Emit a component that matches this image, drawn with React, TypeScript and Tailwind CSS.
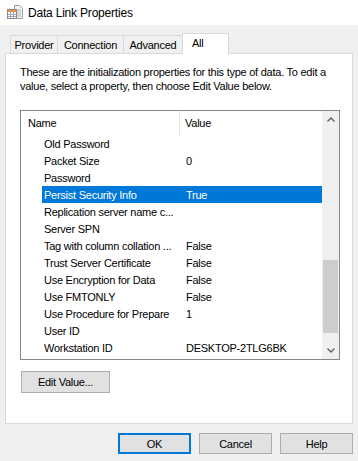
const rows: [string, string][] = [
  ['Old Password', ''],
  ['Packet Size', '0'],
  ['Password', ''],
  ['Persist Security Info', 'True'],
  ['Replication server name c...', ''],
  ['Server SPN', ''],
  ['Tag with column collation ...', 'False'],
  ['Trust Server Certificate', 'False'],
  ['Use Encryption for Data', 'False'],
  ['Use FMTONLY', 'False'],
  ['Use Procedure for Prepare', '1'],
  ['User ID', ''],
  ['Workstation ID', 'DESKTOP-2TLG6BK'],
]

const DataLinkIcon = () => (
  <svg width="16" height="16" viewBox="0 0 16 16">
    <path d="M7.5 0.5h5l3 3v10h-8z" fill="#f4f4f4" stroke="#9a9a9a" />
    <path d="M9 5h5M9 7h5M9 9h5M9 11h5" stroke="#b5b5b5" />
    <rect x="0.5" y="4.5" width="9" height="9" fill="#fff" stroke="#8a8a8a" />
    <rect x="1" y="5" width="8" height="2" fill="#e8913a" />
    <path d="M1 9.5h8M1 11.5h8M3.5 7v6M6.5 7v6" stroke="#9aa7b8" />
  </svg>
)

const Chevron = ({ up }: { up?: boolean }) => (
  <svg width="8" height="5" viewBox="0 0 8 5">
    <polyline
      points={up ? '0.5,4.5 4,1 7.5,4.5' : '0.5,0.5 4,4 7.5,0.5'}
      fill="none"
      stroke="#606060"
      strokeWidth="1.4"
    />
  </svg>
)

const Button = ({ label, primary, className = '' }: { label: string; primary?: boolean; className?: string }) => (
  <div
    className={`flex items-center justify-center bg-[#e1e1e1] text-black ${
      primary ? 'border-2 border-[#0078d7]' : 'border border-[#adadad]'
    } ${className}`}
  >
    {label}
  </div>
)

export default function App() {
  return (
    <div className="w-[358px] h-[461px] bg-[#f0f0f0] text-black text-[11px] tracking-[-0.25px] leading-[14px] font-['Liberation_Sans',Arial,sans-serif] overflow-hidden">
      <div className="h-[25px] bg-white flex items-center pl-[7px]">
        <DataLinkIcon />
        <span className="ml-[5px] text-[12px] tracking-[-0.2px]">Data Link Properties</span>
      </div>

      <div className="px-[5px] pt-[8px]">
        <div className="flex items-end pl-[5px] h-[20px]">
          <div className="w-[48px] h-[18px] flex items-center justify-center border border-b-0 border-[#d9d9d9]">Provider</div>
          <div className="w-[66px] h-[18px] flex items-center justify-center border-t border-r border-[#d9d9d9]">Connection</div>
          <div className="w-[58px] h-[18px] flex items-center justify-center border-t border-[#d9d9d9]">Advanced</div>
          <div className="relative z-10 -mb-px w-[47px] h-[21px] flex items-start pt-[2px] pl-[9px] bg-white border border-b-0 border-[#d9d9d9]">All</div>
        </div>

        <div className="w-[348px] h-[371px] bg-white border border-[#d9d9d9] pt-[11px] pl-[14px]">
          <p>
            These are the initialization properties for this type of data. To edit a
            <br />
            value, select a property, then choose Edit Value below.
          </p>

          <div className="mt-[17px] w-[320px] h-[250px] border border-[#828790] flex">
            <div className="w-[301px] flex flex-col">
              <div className="h-[24px] flex items-center shrink-0">
                <div className="w-[159px] pl-[7px] h-full flex items-center border-r border-[#e5e5e5] my-[2px]">Name</div>
                <div className="pl-[5px]">Value</div>
              </div>
              {rows.map(([name, value], i) => {
                const selected = i === 3
                return (
                  <div key={name} className="h-[17px] flex items-center shrink-0 pl-[21px]">
                    <div className={`flex-1 h-full flex items-center ${selected ? 'bg-[#0078d7] text-white' : ''}`}>
                      <div className="w-[142px] pl-[2px] whitespace-nowrap">{name}</div>
                      <div className="pl-[2px] whitespace-nowrap">{value}</div>
                    </div>
                  </div>
                )
              })}
            </div>
            <div className="w-[17px] bg-[#f0f0f0] flex flex-col">
              <div className="h-[17px] flex items-center justify-center">
                <Chevron up />
              </div>
              <div className="flex-1">
                <div className="mt-[132px] mx-[1px] h-[73px] bg-[#cdcdcd]" />
              </div>
              <div className="h-[17px] flex items-center justify-center">
                <Chevron />
              </div>
            </div>
          </div>

          <Button label="Edit Value..." className="mt-[11px] ml-[1px] w-[89px] h-[22px]" />
        </div>
      </div>

      <div className="flex justify-end gap-[8px] pr-[5px] mt-[9px]">
        <Button label="OK" primary className="w-[73px] h-[21px]" />
        <Button label="Cancel" className="w-[73px] h-[21px]" />
        <Button label="Help" className="w-[73px] h-[21px]" />
      </div>
    </div>
  )
}
